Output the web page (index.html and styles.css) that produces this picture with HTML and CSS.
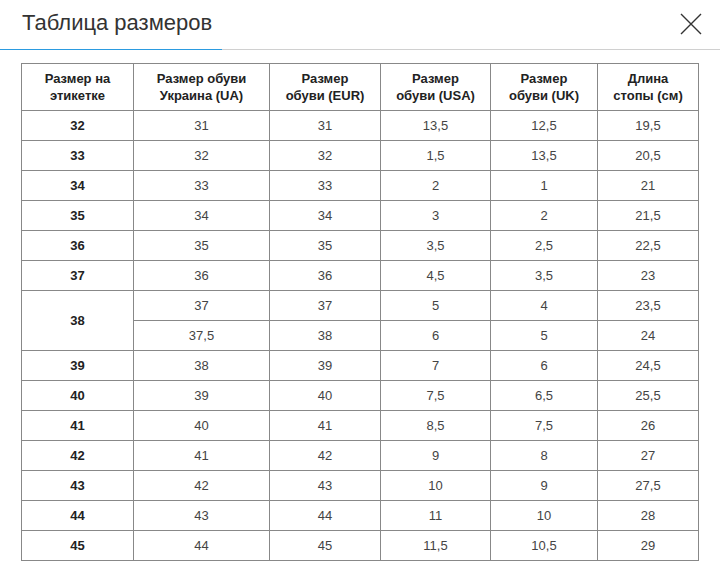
FILE: index.html
```html
<!DOCTYPE html>
<html lang="ru">
<head>
<meta charset="utf-8">
<link rel="stylesheet" href="styles.css">
</head>
<body>
<div class="modal">
  <div class="head">
    <h1 class="title">Таблица размеров</h1>
    <svg class="close" width="22" height="22" viewBox="0 0 22 22"><path d="M1 1 L21 21 M21 1 L1 21" stroke="#333" stroke-width="1.4" fill="none"/></svg>
  </div>
  <div class="rule"><span class="rule-accent"></span></div>
  <table class="sizes">
    <colgroup>
      <col class="c1"><col class="c2"><col class="c3"><col class="c4"><col class="c5"><col class="c6">
    </colgroup>
    <thead>
      <tr><th>Размер на<br>этикетке</th><th>Размер обуви<br>Украина (UA)</th><th>Размер<br>обуви (EUR)</th><th>Размер<br>обуви (USA)</th><th>Размер<br>обуви (UK)</th><th>Длина<br>стопы (см)</th></tr>
    </thead>
    <tbody>
      <tr><td class="lbl">32</td><td>31</td><td>31</td><td>13,5</td><td>12,5</td><td>19,5</td></tr>
      <tr><td class="lbl">33</td><td>32</td><td>32</td><td>1,5</td><td>13,5</td><td>20,5</td></tr>
      <tr><td class="lbl">34</td><td>33</td><td>33</td><td>2</td><td>1</td><td>21</td></tr>
      <tr><td class="lbl">35</td><td>34</td><td>34</td><td>3</td><td>2</td><td>21,5</td></tr>
      <tr><td class="lbl">36</td><td>35</td><td>35</td><td>3,5</td><td>2,5</td><td>22,5</td></tr>
      <tr><td class="lbl">37</td><td>36</td><td>36</td><td>4,5</td><td>3,5</td><td>23</td></tr>
      <tr><td class="lbl" rowspan="2">38</td><td>37</td><td>37</td><td>5</td><td>4</td><td>23,5</td></tr>
      <tr><td>37,5</td><td>38</td><td>6</td><td>5</td><td>24</td></tr>
      <tr><td class="lbl">39</td><td>38</td><td>39</td><td>7</td><td>6</td><td>24,5</td></tr>
      <tr><td class="lbl">40</td><td>39</td><td>40</td><td>7,5</td><td>6,5</td><td>25,5</td></tr>
      <tr><td class="lbl">41</td><td>40</td><td>41</td><td>8,5</td><td>7,5</td><td>26</td></tr>
      <tr><td class="lbl">42</td><td>41</td><td>42</td><td>9</td><td>8</td><td>27</td></tr>
      <tr><td class="lbl">43</td><td>42</td><td>43</td><td>10</td><td>9</td><td>27,5</td></tr>
      <tr><td class="lbl">44</td><td>43</td><td>44</td><td>11</td><td>10</td><td>28</td></tr>
      <tr><td class="lbl">45</td><td>44</td><td>45</td><td>11,5</td><td>10,5</td><td>29</td></tr>
    </tbody>
  </table>
</div>
</body>
</html>
```
FILE: styles.css
```css
html, body {
  margin: 0;
  padding: 0;
  background: #fff;
}
body {
  font-family: "Liberation Sans", Arial, sans-serif;
  color: #333;
}
.modal {
  width: 720px;
}
.head {
  display: flex;
  justify-content: space-between;
  align-items: center;
  height: 49px;
  padding: 0 18px 0 22px;
  box-sizing: border-box;
}
.title {
  margin: 0;
  font-weight: normal;
  font-size: 22px;
  color: #333;
  line-height: 1;
  padding-bottom: 4px;
}
.close {
  display: block;
  margin-top: -2px;
}
.rule {
  height: 1px;
  background: #d0d0d0;
  display: flex;
}
.rule-accent {
  width: 222px;
  background: #2b9be0;
}
.sizes {
  margin: 13px 0 0 21px;
  border-collapse: collapse;
  table-layout: fixed;
  width: 678px;
  font-size: 13px;
}
.c1 { width: 112px; }
.c2 { width: 136px; }
.c3 { width: 111px; }
.c4 { width: 110px; }
.c5 { width: 107px; }
.c6 { width: 101px; }
.sizes th, .sizes td {
  border: 1px solid #888;
  text-align: center;
  padding: 0;
}
.sizes th {
  height: 46px;
  font-weight: bold;
  color: #222;
  line-height: 17px;
}
.sizes td {
  height: 29px;
  color: #444;
}
.sizes td.lbl {
  font-weight: bold;
  color: #222;
}
```
